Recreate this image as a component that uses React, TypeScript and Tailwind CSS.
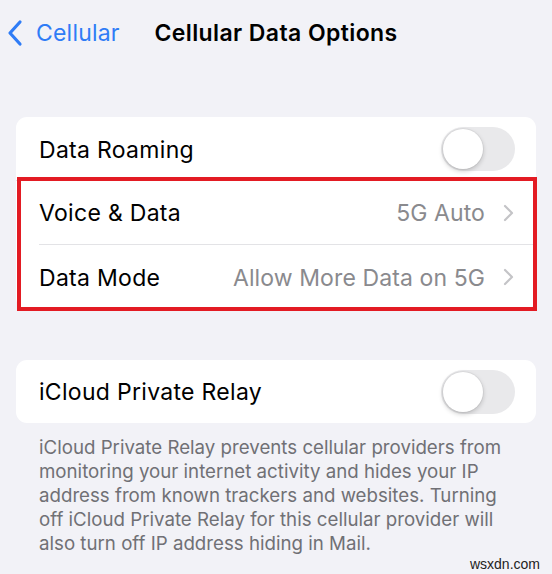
import React from "react";

function Toggle() {
  return (
    <div className="w-[74px] h-[44px] rounded-full bg-[#e9e9eb] p-[2px] flex items-center">
      <div className="w-[40px] h-[40px] rounded-full bg-white shadow-[0_2px_5px_rgba(0,0,0,0.2),0_0_0_1px_rgba(0,0,0,0.04)]" />
    </div>
  );
}

function Chevron() {
  return (
    <svg width="11" height="18" viewBox="0 0 11 18" fill="none" className="ml-[18px]">
      <path d="M2 2l7 7-7 7" stroke="#c4c4c7" strokeWidth="2.2" strokeLinecap="round" strokeLinejoin="round" />
    </svg>
  );
}

export default function App() {
  return (
    <div
      className="w-[552px] h-[574px] bg-[#f2f2f7] overflow-hidden relative"
      style={{ fontFamily: "Inter, 'Liberation Sans', sans-serif" }}
    >
      {/* nav bar */}
      <div className="h-[66px] grid grid-cols-[1fr_auto_1fr] items-center">
        <div className="flex items-center pl-[7px] text-[#2f7cf6] text-[23px] tracking-[0.2px]">
          <svg width="16" height="28" viewBox="0 0 16 28" fill="none">
            <path d="M13 3L3 14l10 11" stroke="#2f7cf6" strokeWidth="3.2" strokeLinecap="round" strokeLinejoin="round" />
          </svg>
          <span className="ml-[13px]">Cellular</span>
        </div>
        <div className="text-[23px] font-semibold text-black tracking-[0.4px]">Cellular Data Options</div>
        <div />
      </div>

      {/* first group */}
      <div className="mx-4 mt-[51px] bg-white rounded-[11px] relative text-[23px] tracking-[0.3px]">
        <div className="h-[63px] flex items-center justify-between pl-[23px] pr-[21px]">
          <span className="text-black pt-[3px]">Data Roaming</span>
          <Toggle />
        </div>
        <div className="h-[64px] flex items-center pl-[23px] pr-[22px] border-t border-[#e3e3e6]">
          <span className="text-black flex-1 pt-[2px]">Voice &amp; Data</span>
          <span className="text-[#8a8a8e] pt-[2px] tracking-[0.1px]">5G Auto</span>
          <Chevron />
        </div>
        <div className="ml-[23px] h-px bg-[#e3e3e6]" />
        <div className="h-[64px] flex items-center pl-[23px] pr-[22px]">
          <span className="text-black flex-1 pt-[2px]">Data Mode</span>
          <span className="text-[#8a8a8e] pt-[2px] tracking-[0.1px]">Allow More Data on 5G</span>
          <Chevron />
        </div>
        <div className="absolute left-[1px] right-[-1px] top-[60px] bottom-[-2px] border-4 border-[#e31b23]" />
      </div>

      {/* second group */}
      <div className="mx-4 mt-[51px] bg-white rounded-[11px] h-[63px] flex items-center justify-between pl-[23px] pr-[21px] text-[23px] tracking-[0.3px]">
        <span className="text-black pt-[2px]">iCloud Private Relay</span>
        <Toggle />
      </div>
      <p className="mt-[13px] pl-[39px] pr-[40px] text-[18.7px] leading-[24px] text-[#707075]">
        iCloud Private Relay prevents cellular providers from monitoring your internet activity and hides your IP address from known trackers and websites. Turning off iCloud Private Relay for this cellular provider will also turn off IP address hiding in Mail.
      </p>

      <div className="absolute right-[12px] bottom-[2px] text-[14px] leading-[16px] text-[#222]" style={{ fontFamily: "'Liberation Sans', sans-serif" }}>
        wsxdn.com
      </div>
    </div>
  );
}
